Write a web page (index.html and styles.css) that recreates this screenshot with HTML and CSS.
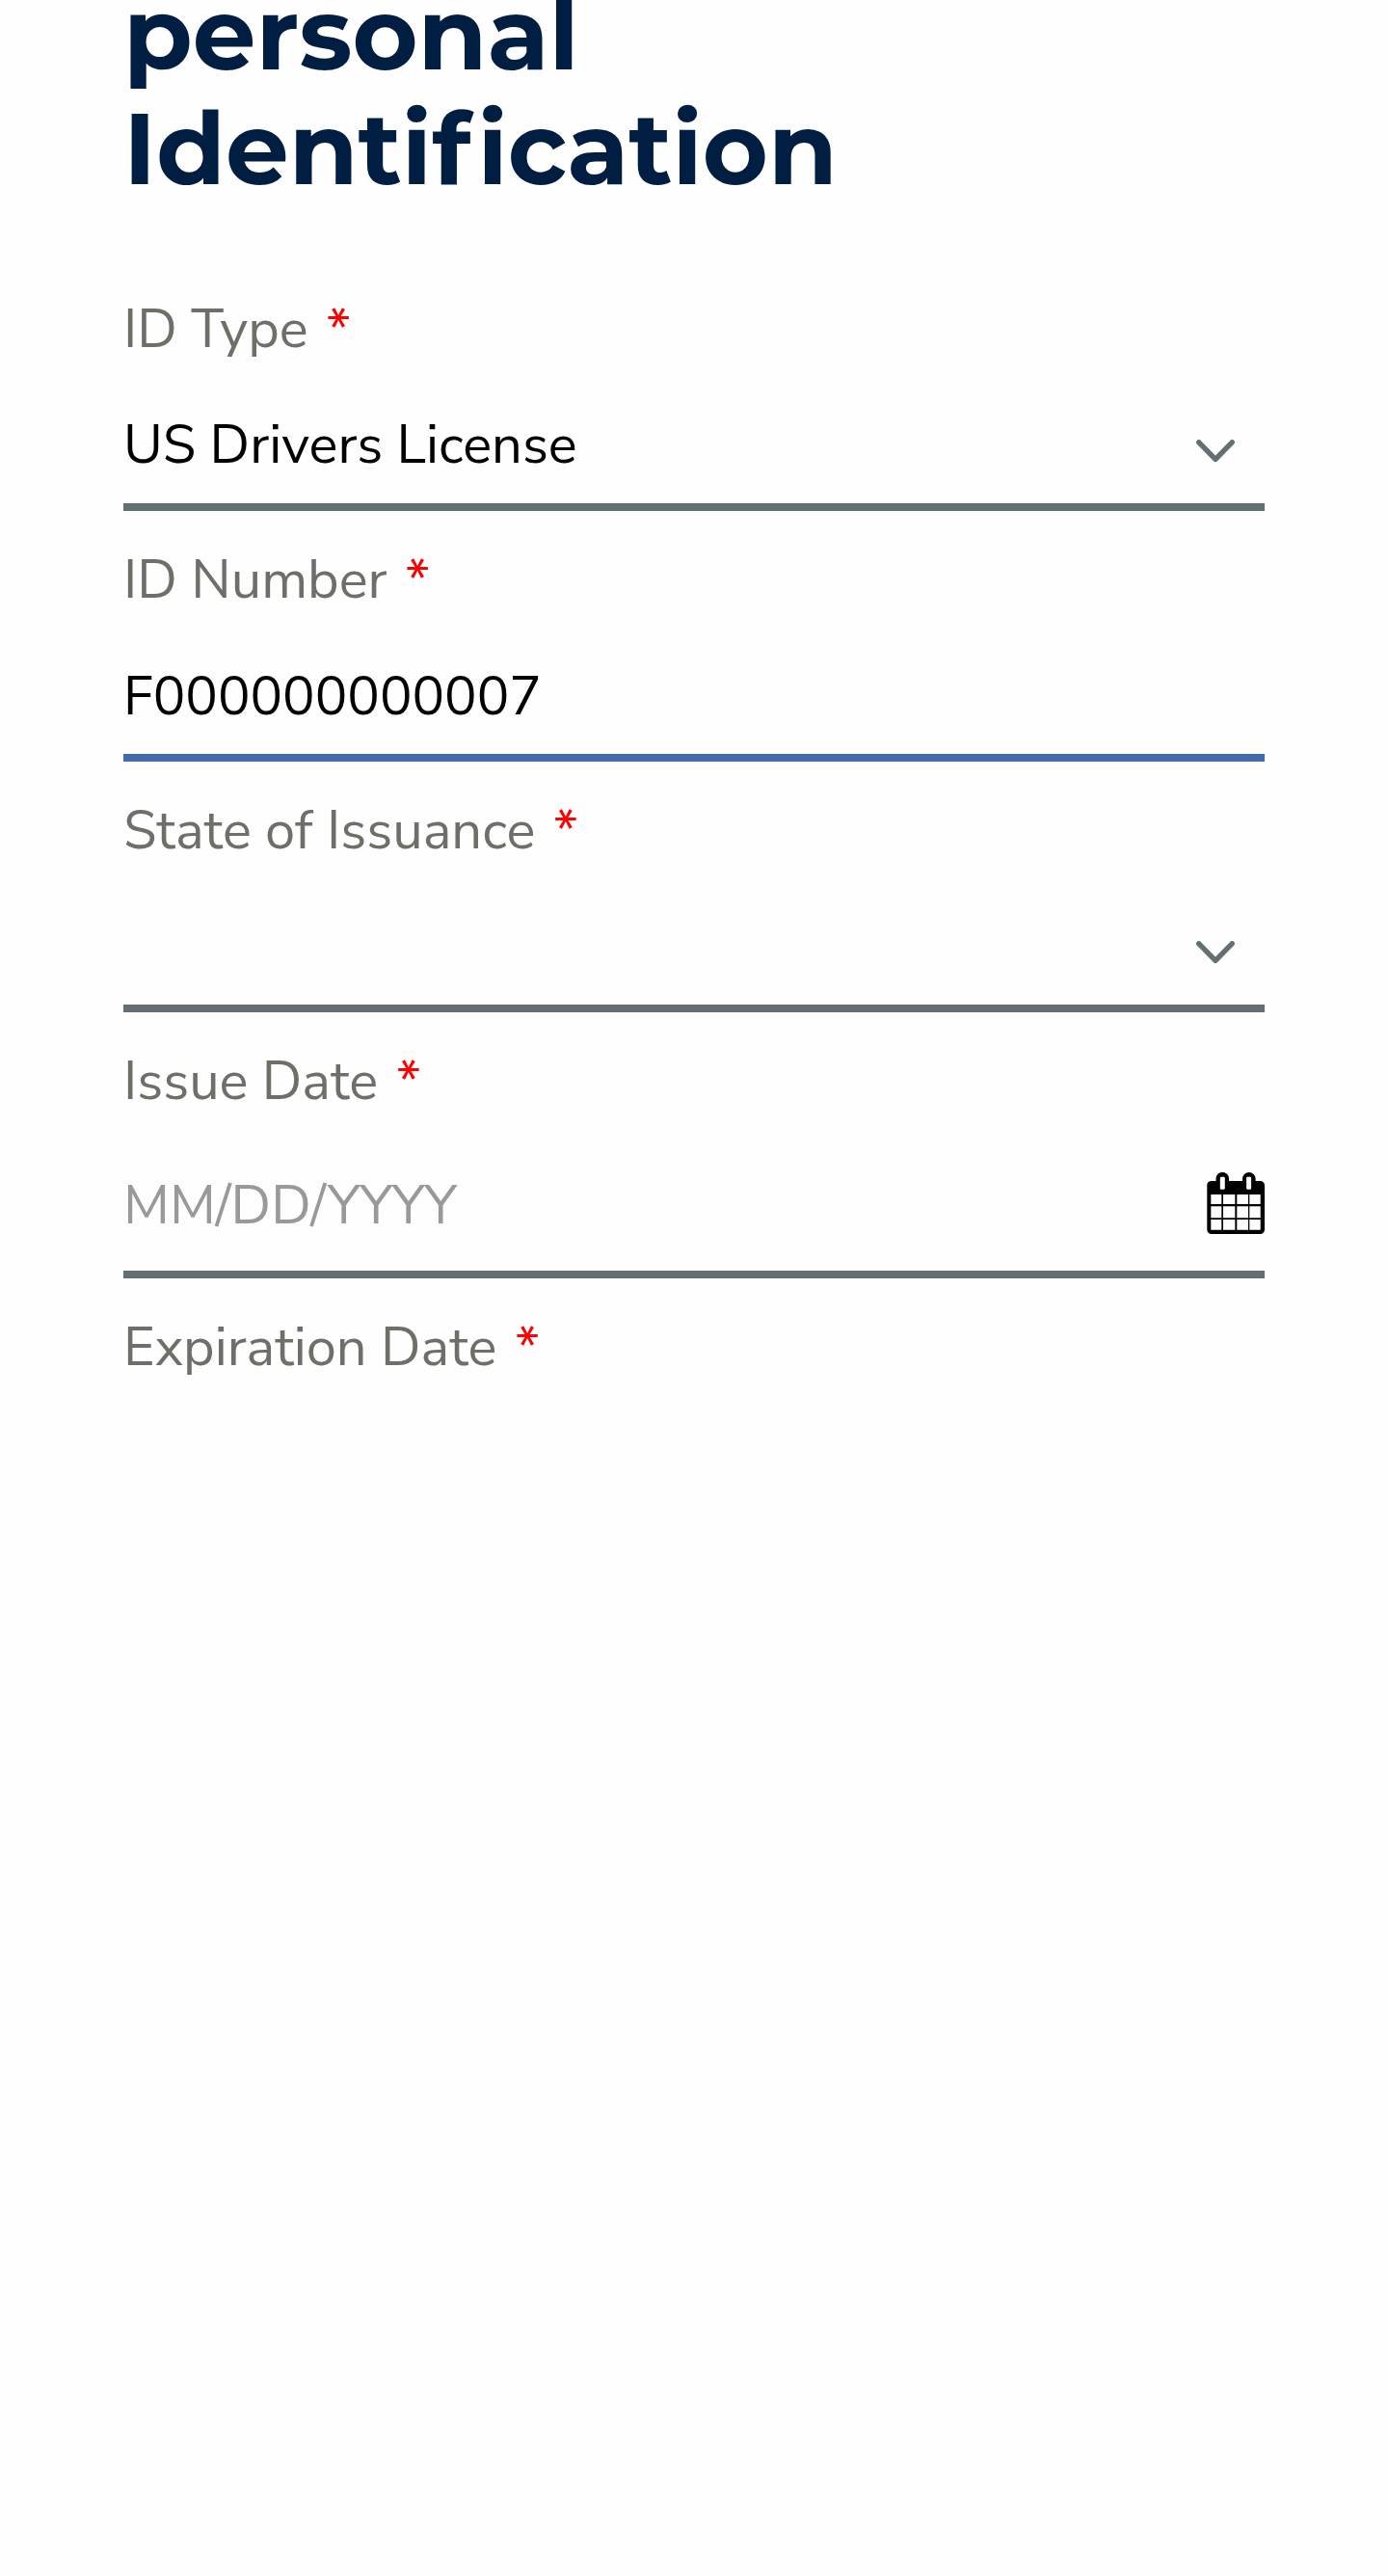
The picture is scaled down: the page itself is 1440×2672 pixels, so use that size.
FILE: index.html
```
<!DOCTYPE html>
<html lang="en">
<head>
<meta charset="utf-8">
<title>Personal Identification</title>
<link rel="stylesheet" href="styles.css">
</head>
<body>
<main class="page">
  <h1 class="title">personal<br>Identi<span class="title-gap">f</span>ication</h1>
  <form class="form">
    <div class="field">
      <div class="label">ID Type<span class="required">*</span></div>
      <div class="control">
        <span class="value">US Drivers License</span>
        <svg class="chevron" viewBox="0 0 40 24"><path d="M2.8 2.8 20 20.3 37.2 2.8"/></svg>
      </div>
    </div>
    <div class="field">
      <div class="label">ID Number<span class="required">*</span></div>
      <div class="control control-focused">
        <span class="value value-input">F000000000007</span>
      </div>
    </div>
    <div class="field">
      <div class="label">State of Issuance<span class="required">*</span></div>
      <div class="control">
        <span class="value"></span>
        <svg class="chevron" viewBox="0 0 40 24"><path d="M2.8 2.8 20 20.3 37.2 2.8"/></svg>
      </div>
    </div>
    <div class="field">
      <div class="label">Issue Date<span class="required">*</span></div>
      <div class="control control-date">
        <span class="value value-placeholder">MM/DD/YYYY</span>
        <svg class="calendar" viewBox="0 0 60 64">
          <path fill-rule="evenodd" d="M4.500 9H9.500V6.500A6.700 6.500 0 0 1 23 6.500V9H37V6.500A6.800 6.500 0 0 1 50.600 6.500V9H55.500A4.500 4.500 0 0 1 60 13.500V59.500A4.500 4.500 0 0 1 55.500 64H4.800A4.500 4.500 0 0 1 .3 59.500V13.500A4.500 4.500 0 0 1 4.500 9ZM15 4.700a1.200 1.200 0 0 0-1.200 1.200V16.500a1.200 1.200 0 0 0 1.200 1.200h2.600a1.200 1.200 0 0 0 1.200-1.200V5.900a1.200 1.200 0 0 0-1.200-1.200ZM42.300 4.700a1.200 1.200 0 0 0-1.200 1.200V16.500a1.200 1.200 0 0 0 1.200 1.200h2.600a1.200 1.200 0 0 0 1.200-1.200V5.900a1.200 1.200 0 0 0-1.200-1.200ZM4.300 23v10h11v-10ZM17 23v10h12.300v-10ZM31.300 23v10h11.700v-10ZM44.300 23v10h11.400v-10ZM4.300 35.200v12h11v-12ZM17 35.200v12h12.300v-12ZM31.300 35.200v12h11.700v-12ZM44.300 35.200v12h11.400v-12ZM4.300 49v10.700h11v-10.700ZM17 49v10.700h12.300v-10.700ZM31.300 49v10.700h11.700v-10.700ZM44.300 49v10.700h11.400v-10.700Z"/>
        </svg>
      </div>
    </div>
    <div class="field">
      <div class="label">Expiration Date<span class="required">*</span></div>
    </div>
  </form>
</main>
</body>
</html>
```
FILE: styles.css
```
html {
  overflow: hidden;
  background: #fefefe;
}

body {
  margin: 0;
}

.page {
  display: flow-root;
  min-height: 2672px;
  box-sizing: border-box;
  padding: 0 128px;
  font-family: "Nunito Sans", Nunito, Lato, sans-serif;
  font-size: 56px;
}

.title {
  margin: -25px 0 57px;
  font: 700 104px/119px Montserrat, Inter, sans-serif;
  font-variant-ligatures: none;
  color: #001e41;
}

.title-gap {
  letter-spacing: 7px;
}

.form {
  display: flex;
  flex-direction: column;
}

.label {
  line-height: 143px;
  color: #6d7068;
}

.required {
  margin-left: 19px;
  color: #f00;
}

.control {
  display: flex;
  align-items: center;
  justify-content: space-between;
  height: 109px;
  border-bottom: 8px solid #636f70;
}

.control-focused {
  border-color: #426ba9;
}

.control-date {
  height: 125px;
}

.value {
  line-height: 97px;
  color: #000;
  padding-bottom: 12px;
}

.value-input {
  padding-bottom: 10px;
}

.value-placeholder {
  padding-bottom: 10px;
  color: #999;
}

.chevron {
  width: 40px;
  height: 24px;
  margin-right: 31px;
  fill: none;
  stroke: #636f70;
  stroke-width: 5.4;
  stroke-linecap: round;
  stroke-linejoin: round;
}

.calendar {
  width: 60px;
  height: 64px;
  margin-bottom: 15px;
}
```
